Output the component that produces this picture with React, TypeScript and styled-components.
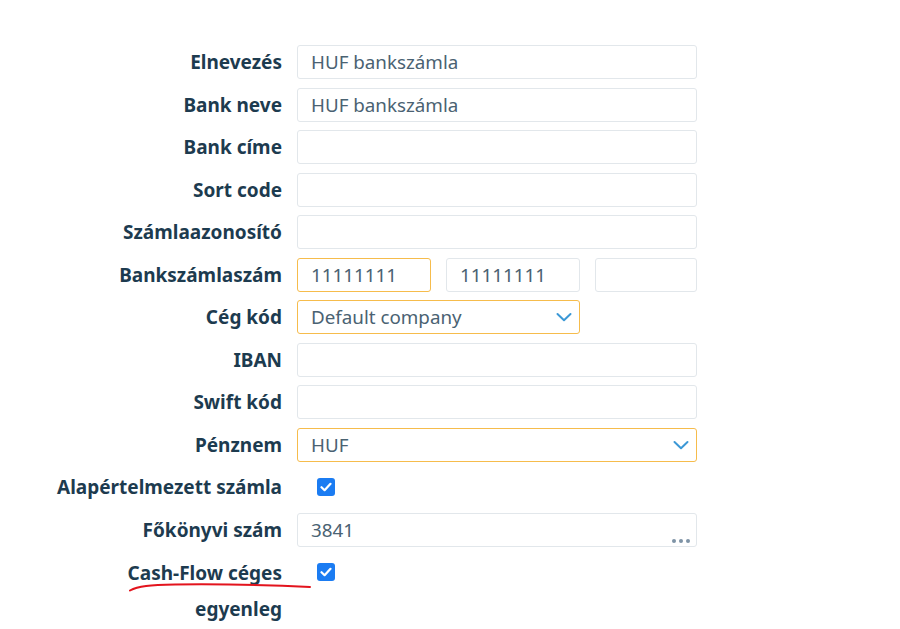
import React from "react";
import styled, { createGlobalStyle } from "styled-components";

const Global = createGlobalStyle`
  html, body { margin: 0; padding: 0; background: #ffffff; }
  body { font-family: "Noto Sans", "Open Sans", sans-serif; }
`;

const Page = styled.div`
  width: 900px;
  height: 629px;
  position: relative;
  overflow: hidden;
  background: #fff;
`;

const Form = styled.div`
  display: grid;
  grid-template-columns: 230px 400px;
  column-gap: 15px;
  row-gap: 8.5px;
  padding: 45px 0 0 52px;
  align-items: start;
`;

const Label = styled.div<{ $multi?: boolean }>`
  font-size: 19px;
  font-weight: 700;
  color: #1d3b4f;
  text-align: right;
  line-height: ${(p) => (p.$multi ? "36px" : "34px")};
`;

const Box = styled.div<{ $focus?: boolean; $width?: string; $select?: boolean }>`
  box-sizing: border-box;
  height: 34px;
  width: ${(p) => p.$width || "100%"};
  border: 1px solid ${(p) => (p.$focus ? "#f6bc4c" : "#e2e7eb")};
  border-radius: 3px;
  padding: 0 ${(p) => (p.$select ? "7px" : "13px")} 0 13px;
  display: flex;
  align-items: center;
  font-size: 18.8px;
  color: #4a6272;
  background: #fff;
  position: relative;
`;

const BoxText = styled.span`
  flex: 1;
  white-space: nowrap;
`;

const Split = styled.div`
  display: grid;
  grid-template-columns: 134px 134px 1fr;
  column-gap: 15px;
`;

const CheckCell = styled.div`
  height: 34px;
  display: flex;
  align-items: center;
  padding-left: 20px;
`;

const Check = styled.div`
  width: 18px;
  height: 18px;
  border-radius: 3px;
  background: #1b7cf2;
  display: flex;
  align-items: center;
  justify-content: center;
`;

const Dots = styled.div`
  position: absolute;
  right: 6px;
  bottom: 3px;
  display: flex;
  gap: 3px;
`;

const Dot = styled.span`
  width: 4px;
  height: 4px;
  border-radius: 50%;
  background: #7e93a6;
`;

const Annotation = styled.svg`
  position: absolute;
  left: 0;
  top: 0;
  pointer-events: none;
`;

const Chevron = () => (
  <svg width="16" height="10" viewBox="0 0 16 10">
    <path d="M1.5 2 L8 8.2 L14.5 2" fill="none" stroke="#3b98d6" strokeWidth="2" strokeLinecap="round" strokeLinejoin="round" />
  </svg>
);

const Tick = () => (
  <svg width="12" height="10" viewBox="0 0 12 10">
    <path d="M1.5 5.2 L4.6 8.2 L10.5 1.8" fill="none" stroke="#fff" strokeWidth="2.2" strokeLinecap="round" strokeLinejoin="round" />
  </svg>
);

const TextRow = ({ label, value }: { label: string; value?: string }) => (
  <>
    <Label>{label}</Label>
    <Box>
      <BoxText>{value}</BoxText>
    </Box>
  </>
);

export default function App() {
  return (
    <Page>
      <Global />
      <Form>
        <TextRow label="Elnevezés" value="HUF bankszámla" />
        <TextRow label="Bank neve" value="HUF bankszámla" />
        <TextRow label="Bank címe" />
        <TextRow label="Sort code" />
        <TextRow label="Számlaazonosító" />

        <Label>Bankszámlaszám</Label>
        <Split>
          <Box $focus>
            <BoxText>11111111</BoxText>
          </Box>
          <Box>
            <BoxText>11111111</BoxText>
          </Box>
          <Box />
        </Split>

        <Label>Cég kód</Label>
        <Box $focus $select $width="283px">
          <BoxText>Default company</BoxText>
          <Chevron />
        </Box>

        <TextRow label="IBAN" />
        <TextRow label="Swift kód" />

        <Label>Pénznem</Label>
        <Box $focus $select>
          <BoxText>HUF</BoxText>
          <Chevron />
        </Box>

        <Label>Alapértelmezett számla</Label>
        <CheckCell>
          <Check>
            <Tick />
          </Check>
        </CheckCell>

        <Label>Főkönyvi szám</Label>
        <Box>
          <BoxText>3841</BoxText>
          <Dots>
            <Dot />
            <Dot />
            <Dot />
          </Dots>
        </Box>

        <Label $multi>Cash-Flow céges egyenleg</Label>
        <CheckCell>
          <Check>
            <Tick />
          </Check>
        </CheckCell>
      </Form>
      <Annotation width="900" height="629" viewBox="0 0 900 629">
        <path
          d="M130 590.5 C 138 586, 150 585, 175 584.5 C 220 584, 270 585, 310 587"
          fill="none"
          stroke="#e3141d"
          strokeWidth="2"
          strokeLinecap="round"
        />
      </Annotation>
    </Page>
  );
}
